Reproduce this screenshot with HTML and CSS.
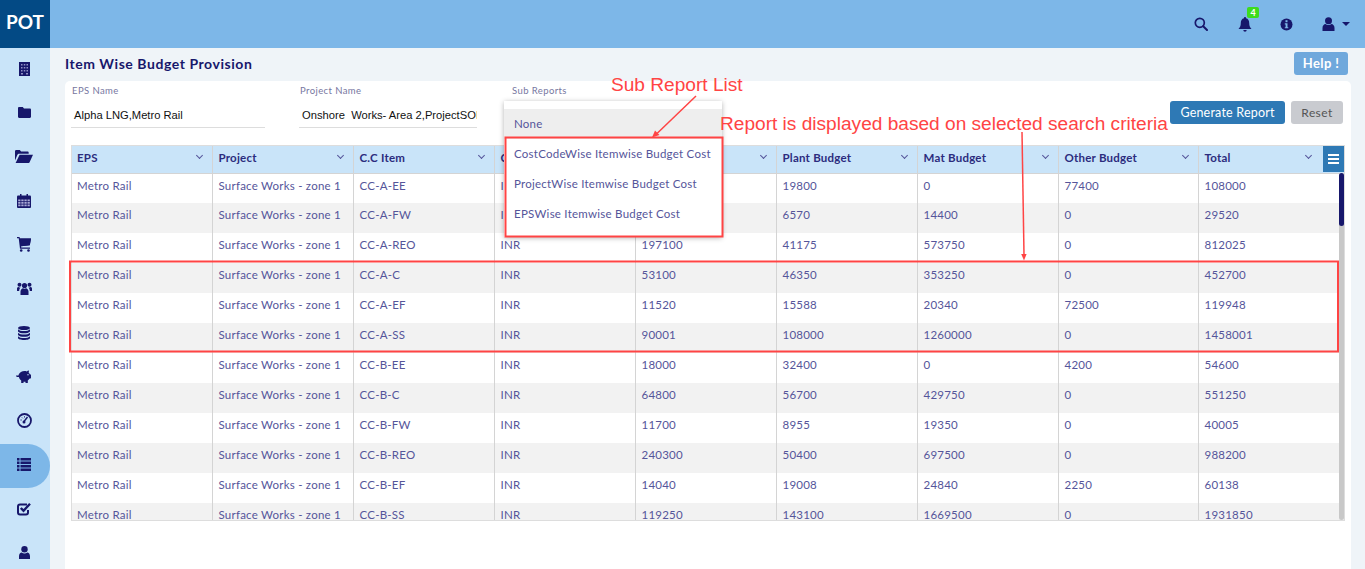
FILE: index.html
```html
<!DOCTYPE html>
<html lang="en">
<head>
  <meta charset="UTF-8">
  <title>Item Wise Budget Provision</title>
  <link rel="stylesheet" href="styles.css">
</head>
<body>

<header class="topbar">
  <div class="logo">POT</div>
  <div class="top-icons">
    <span class="top-icon">
      <svg width="14" height="14" viewBox="0 0 14 14"><circle cx="5.800" cy="5.800" r="4.500" fill="none" stroke="#17176b" stroke-width="1.700"/><path d="M9.200 9.200L13 13" stroke="#17176b" stroke-width="2" stroke-linecap="round"/></svg>
    </span>
    <span class="top-icon bell">
      <svg width="14" height="15" viewBox="0 0 14 15"><path d="M7 0a1 1 0 0 1 1 1.200C10.200 1.700 11.200 3.500 11.200 6c0 3 .8 4.500 2.300 6H.5C2 10.500 2.800 9 2.800 6c0-2.500 1-4.300 3.200-4.800A1 1 0 0 1 7 0zM5.300 13h3.400a1.700 1.700 0 0 1-3.400 0z" fill="#17176b"/></svg>
      <span class="badge">4</span>
    </span>
    <span class="top-icon">
      <svg width="13" height="13" viewBox="0 0 13 13"><circle cx="6.500" cy="6.500" r="6" fill="#17176b"/><rect x="5.500" y="2.200" width="2" height="2" fill="#7db7e8"/><path d="M4.800 5.300h2.700v3.900h.8v1.100H4.800V9.200h.8V6.400h-.8z" fill="#7db7e8"/></svg>
    </span>
    <span class="top-icon user-menu">
      <svg width="13" height="14" viewBox="0 0 13 14"><circle cx="6.500" cy="3.700" r="3.500" fill="#17176b"/><path d="M.5 14v-3C.5 8.500 2 7.200 3.500 7c.8.700 1.800 1 3 1s2.200-.3 3-1c1.500.2 3 1.500 3 4v3z" fill="#17176b"/></svg>
      <i class="caret"></i>
    </span>
  </div>
</header>

<div class="layout">
  <nav class="sidebar">
    <a class="side-item">
      <svg width="11" height="14" viewBox="0 0 11 14"><rect width="11" height="14" fill="#17176b"/><path d="M2 2h1.500v1.500H2zM4.800 2h1.500v1.500H4.800zM7.500 2H9v1.500H7.500zM2 5h1.500v1.500H2zM4.800 5h1.500v1.500H4.800zM7.500 5H9v1.500H7.500zM2 8h1.500v1.500H2zM4.800 8h1.500v1.500H4.800zM7.500 8H9v1.500H7.500zM2 11h2v1.500H2zM7 11h2v1.500H7z" fill="#8f8fc4"/></svg>
    </a>
    <a class="side-item">
      <svg width="13" height="11" viewBox="0 0 13 11"><path d="M1.200 0h3.600l1.200 1.500h5.800c.7 0 1.200.5 1.200 1.200v7.100c0 .7-.5 1.200-1.200 1.200H1.200C.5 11 0 10.500 0 9.800V1.200C0 .5.500 0 1.200 0z" fill="#17176b"/></svg>
    </a>
    <a class="side-item">
      <svg width="18" height="13" viewBox="0 0 18 13"><path d="M0 10.500V1.300C0 .6.500 0 1.200 0h3.600l1.300 1.500h6.400c.7 0 1.200.5 1.200 1.200v1H4.300C3.400 3.700 2.700 4.200 2.300 5z" fill="#17176b"/><path d="M4.600 4.800H18l-3.300 7.200c-.2.600-.8 1-1.400 1H.6z" fill="#17176b"/></svg>
    </a>
    <a class="side-item">
      <svg width="14" height="14" viewBox="0 0 14 14"><rect y="1.500" width="14" height="12.500" rx="1" fill="#17176b"/><path d="M3 0h1.500v3H3zM9.500 0H11v3H9.500z" fill="#17176b"/><path d="M1.200 5.500h2.300v1.700H1.200zM4.300 5.500h2.300v1.700H4.300zM7.400 5.500h2.300v1.700H7.400zM10.500 5.500h2.300v1.700h-2.300zM1.200 8h2.300v1.700H1.200zM4.300 8h2.300v1.700H4.300zM7.400 8h2.300v1.700H7.400zM10.500 8h2.300v1.700h-2.300zM1.200 10.500h2.300v1.700H1.200zM4.300 10.500h2.300v1.700H4.300zM7.400 10.500h2.300v1.700H7.400zM10.500 10.500h2.300v1.700h-2.300z" fill="#a9a9d6"/></svg>
    </a>
    <a class="side-item">
      <svg width="14" height="15" viewBox="0 0 14 15"><path d="M0 0h2.500l.5 1.500H14l-1.200 6.700-8.800 1 .3 1.300h8.700v1.300H3L1.700 1.300H0z" fill="#17176b"/><path d="M3 1.500h11l-1.200 6.700L4 9.200z" fill="#17176b"/><circle cx="4.200" cy="13.500" r="1.300" fill="#17176b"/><circle cx="11.500" cy="13.500" r="1.300" fill="#17176b"/></svg>
    </a>
    <a class="side-item">
      <svg width="15" height="13" viewBox="0 0 15 13"><circle cx="7.500" cy="3.500" r="2.600" fill="#17176b"/><circle cx="2.500" cy="2.800" r="2" fill="#17176b"/><circle cx="12.500" cy="2.800" r="2" fill="#17176b"/><path d="M3.500 13V9.500C3.500 7.500 5 6.500 6 6.300c.9.500 2.100.5 3 0 1 .2 2.500 1.200 2.500 3.200V13zM0 9V6.500C0 5.500.8 5 1.500 5c.7.500 1.300.600 2 .5-.8.800-1.300 2-1.300 3.500zM15 9V6.500C15 5.500 14.200 5 13.500 5c-.7.500-1.300.600-2 .5.800.800 1.300 2 1.300 3.500z" fill="#17176b"/></svg>
    </a>
    <a class="side-item">
      <svg width="12" height="14" viewBox="0 0 12 14"><ellipse cx="6" cy="2" rx="6" ry="2" fill="#17176b"/><path d="M0 3.200C1 4.500 3.500 5 6 5s5-.5 6-1.800v2.300C11 6.800 8.500 7.300 6 7.300S1 6.800 0 5.500zM0 6.700C1 8 3.500 8.500 6 8.500S11 8 12 6.700V9c-1 1.300-3.500 1.800-6 1.800S1 10.300 0 9zM0 10.200c1 1.300 3.500 1.800 6 1.800s5-.5 6-1.800V12c0 1.100-2.700 2-6 2s-6-.9-6-2z" fill="#17176b"/></svg>
    </a>
    <a class="side-item">
      <svg width="17" height="13" viewBox="0 0 17 13"><path d="M2.500 5C3.500 2.500 6 1 8.500 1c.8 0 1.600.1 2.300.4.500-.6 1.300-1 2.200-1l-.3 2.300c.6.500 1 1.100 1.300 1.800H15v3.700l-1.700.5c-.4.700-.9 1.200-1.500 1.700V13H9.500v-1.300h-2V13H5.200v-2.500C4 9.600 3.200 8.400 2.900 7H1.500C.6 7 0 6.400 0 5.500h2.500z" fill="#17176b"/><circle cx="12" cy="4.800" r=".7" fill="#c9e4f9"/></svg>
    </a>
    <a class="side-item">
      <svg width="15" height="15" viewBox="0 0 15 15"><circle cx="7.500" cy="7.500" r="6.500" fill="none" stroke="#17176b" stroke-width="1.800"/><path d="M7 8.500L10.500 4" stroke="#17176b" stroke-width="1.400"/><circle cx="7" cy="9" r="1.500" fill="#17176b"/><path d="M3.500 7h1.200M5 4.500l.8.800M7.500 3.300v1.200" stroke="#17176b"/></svg>
    </a>
    <a class="side-item active">
      <svg width="14" height="13" viewBox="0 0 14 13"><path d="M0 0h2.500v2.500H0zM3.500 0H14v2.500H3.500zM0 3.500h2.500V6H0zM3.500 3.500H14V6H3.500zM0 7h2.500v2.500H0zM3.500 7H14v2.500H3.500zM0 10.500h2.500V13H0zM3.500 10.500H14V13H3.500z" fill="#17176b"/></svg>
    </a>
    <a class="side-item">
      <svg width="14" height="14" viewBox="0 0 14 14"><path d="M11 8v2.500c0 1.200-.8 2-2 2H3c-1.200 0-2-.8-2-2v-6c0-1.200.8-2 2-2h7" fill="none" stroke="#17176b" stroke-width="2"/><path d="M3.800 6L6.500 8.700 13 1.800" fill="none" stroke="#17176b" stroke-width="2.400"/></svg>
    </a>
    <a class="side-item">
      <svg width="11" height="13" viewBox="0 0 11 13"><circle cx="5.500" cy="3.300" r="3.200" fill="#17176b"/><path d="M0 13v-2.800C0 8 1.300 6.800 2.800 6.600c.7.600 1.600 1 2.700 1s2-.4 2.700-1C9.700 6.800 11 8 11 10.200V13z" fill="#17176b"/></svg>
    </a>
  </nav>

  <main class="content">
    <div class="title-row">
      <h1 class="page-title">Item Wise Budget Provision</h1>
      <button class="btn btn-help">Help !</button>
    </div>

    <section class="card">
      <div class="filters">
        <div class="field field-eps">
          <label>EPS Name</label>
          <div class="field-value">Alpha LNG,Metro Rail</div>
        </div>
        <div class="field field-project">
          <label>Project Name</label>
          <div class="field-value">Onshore &nbsp;Works- Area 2,ProjectSOE</div>
        </div>
        <div class="field field-sub">
          <label>Sub Reports</label>
          <ul class="sub-menu">
            <li class="selected">None</li>
            <li>CostCodeWise Itemwise Budget Cost</li>
            <li>ProjectWise Itemwise Budget Cost</li>
            <li>EPSWise Itemwise Budget Cost</li>
          </ul>
        </div>
        <div class="filter-actions">
          <button class="btn btn-generate">Generate Report</button>
          <button class="btn btn-reset">Reset</button>
        </div>
      </div>

      <div class="grid-wrap">
        <table class="grid">
          <thead>
            <tr>
              <th class="th-narrow"><div class="th-in">EPS<i class="chev"></i></div></th>
              <th><div class="th-in">Project<i class="chev"></i></div></th>
              <th><div class="th-in">C.C Item<i class="chev"></i></div></th>
              <th><div class="th-in">Currency<i class="chev"></i></div></th>
              <th><div class="th-in">Labour Budget<i class="chev"></i></div></th>
              <th><div class="th-in">Plant Budget<i class="chev"></i></div></th>
              <th><div class="th-in">Mat Budget<i class="chev"></i></div></th>
              <th class="th-narrow"><div class="th-in">Other Budget<i class="chev"></i></div></th>
              <th class="th-total"><div class="th-in">Total<i class="chev"></i></div></th>
            </tr>
          </thead>
          <tbody>
            <tr><td>Metro Rail</td><td>Surface Works - zone 1</td><td>CC-A-EE</td><td>INR</td><td>10800</td><td>19800</td><td>0</td><td>77400</td><td>108000</td></tr>
            <tr><td>Metro Rail</td><td>Surface Works - zone 1</td><td>CC-A-FW</td><td>INR</td><td>8550</td><td>6570</td><td>14400</td><td>0</td><td>29520</td></tr>
            <tr><td>Metro Rail</td><td>Surface Works - zone 1</td><td>CC-A-REO</td><td>INR</td><td>197100</td><td>41175</td><td>573750</td><td>0</td><td>812025</td></tr>
            <tr><td>Metro Rail</td><td>Surface Works - zone 1</td><td>CC-A-C</td><td>INR</td><td>53100</td><td>46350</td><td>353250</td><td>0</td><td>452700</td></tr>
            <tr><td>Metro Rail</td><td>Surface Works - zone 1</td><td>CC-A-EF</td><td>INR</td><td>11520</td><td>15588</td><td>20340</td><td>72500</td><td>119948</td></tr>
            <tr><td>Metro Rail</td><td>Surface Works - zone 1</td><td>CC-A-SS</td><td>INR</td><td>90001</td><td>108000</td><td>1260000</td><td>0</td><td>1458001</td></tr>
            <tr><td>Metro Rail</td><td>Surface Works - zone 1</td><td>CC-B-EE</td><td>INR</td><td>18000</td><td>32400</td><td>0</td><td>4200</td><td>54600</td></tr>
            <tr><td>Metro Rail</td><td>Surface Works - zone 1</td><td>CC-B-C</td><td>INR</td><td>64800</td><td>56700</td><td>429750</td><td>0</td><td>551250</td></tr>
            <tr><td>Metro Rail</td><td>Surface Works - zone 1</td><td>CC-B-FW</td><td>INR</td><td>11700</td><td>8955</td><td>19350</td><td>0</td><td>40005</td></tr>
            <tr><td>Metro Rail</td><td>Surface Works - zone 1</td><td>CC-B-REO</td><td>INR</td><td>240300</td><td>50400</td><td>697500</td><td>0</td><td>988200</td></tr>
            <tr><td>Metro Rail</td><td>Surface Works - zone 1</td><td>CC-B-EF</td><td>INR</td><td>14040</td><td>19008</td><td>24840</td><td>2250</td><td>60138</td></tr>
            <tr><td>Metro Rail</td><td>Surface Works - zone 1</td><td>CC-B-SS</td><td>INR</td><td>119250</td><td>143100</td><td>1669500</td><td>0</td><td>1931850</td></tr>
          </tbody>
        </table>
        <button class="grid-menu"><i></i><i></i><i></i></button>
        <div class="scroll-track"><div class="scroll-thumb"></div></div>
      </div>
    </section>
  </main>
</div>

<!-- red notes drawn on top of the screenshot -->
<div class="note note-list">Sub Report List</div>
<div class="note note-report">Report is displayed based on selected search criteria</div>
<svg class="note-lines" width="1365" height="569" viewBox="0 0 1365 569">
  <rect x="505.500" y="137.500" width="217" height="99" fill="none" stroke="#f44" stroke-width="2"/>
  <rect x="70" y="261.500" width="1268" height="90" fill="none" stroke="#f44" stroke-width="2"/>
  <path d="M696 96L657 133.500" stroke="#f44" stroke-width="1.500"/>
  <path d="M652 137.500l3-7 4.500 4.500z" fill="#f44"/>
  <path d="M1022 132L1024 255" stroke="#f44" stroke-width="1.500"/>
  <path d="M1024 260.500l-2.800-6.500h5.400z" fill="#f44"/>
</svg>

</body>
</html>
```

FILE: styles.css
```css
* {
  box-sizing: border-box;
}
html, body {
  height: 100%;
}
body {
  margin: 0;
  font-family: "Lato", sans-serif;
  background: #eff4f8;
  color: #55559a;
  overflow: hidden;
}

/* top bar */
.topbar {
  display: flex;
  justify-content: space-between;
  height: 48px;
  background: #7db7e8;
}
.logo {
  width: 50px;
  background: #034a85;
  color: #fff;
  font-weight: bold;
  font-size: 19px;
  line-height: 44px;
  text-align: center;
}
.top-icons {
  display: flex;
  align-items: center;
  padding-right: 11px;
}
.top-icon {
  position: relative;
  display: flex;
  align-items: center;
  justify-content: center;
  width: 43px;
  height: 48px;
}
.bell {
  left: 1px;
}
.user-menu {
  justify-content: flex-start;
  padding-left: 14px;
  gap: 7px;
  width: 46px;
}
.caret {
  border-left: 4px solid transparent;
  border-right: 4px solid transparent;
  border-top: 4px solid #17176b;
}
.badge {
  position: absolute;
  top: 7px;
  left: 24px;
  width: 12px;
  height: 11px;
  background: #3ddc1c;
  border-radius: 2px;
  color: #fff;
  font-size: 9px;
  font-weight: bold;
  line-height: 11px;
  text-align: center;
}

/* sidebar */
.layout {
  display: flex;
  height: calc(100% - 48px);
}
.sidebar {
  width: 50px;
  flex: none;
  background: #c9e4f9;
  overflow: hidden;
}
.side-item {
  display: flex;
  align-items: center;
  justify-content: center;
  height: 44px;
  padding: 0 2px 3px 0;
}
.side-item.active {
  background: #7db7e8;
  border-radius: 0 22px 22px 0;
}

/* main */
.content {
  flex: 1;
  padding: 0 14px 0 15px;
  min-width: 0;
}
.title-row {
  display: flex;
  justify-content: space-between;
  align-items: center;
  height: 33px;
  margin-right: -11px;
  padding-right: 14px;
}
.page-title {
  margin: 0;
  padding-bottom: 2px;
  font-size: 14px;
  font-weight: bold;
  letter-spacing: 0.55px;
  color: #17176b;
}
.btn {
  border: none;
  border-radius: 3px;
  font-family: "Lato", sans-serif;
  font-size: 13px;
  height: 23px;
  padding: 0;
}
.btn-help {
  width: 54px;
  margin-top: -3px;
  background: #6fa8dc;
  color: #fff;
  font-weight: bold;
  letter-spacing: 0.4px;
}
.btn-generate {
  width: 115px;
  background: #2e79b5;
  color: #fff;
  font-size: 12.500px;
  letter-spacing: 0.2px;
}
.btn-reset {
  width: 52px;
  background: #c9cbd0;
  color: #555;
  font-size: 12px;
  letter-spacing: 0.4px;
}
.card {
  background: #fff;
  border-radius: 5px 5px 0 0;
  padding: 0 6px;
  height: 500px;
}

/* filter row */
.filters {
  display: flex;
  height: 64px;
}
.field {
  padding-top: 4px;
}
.field label {
  display: block;
  font-size: 9.500px;
  letter-spacing: 0.4px;
  line-height: 11px;
  color: #77779f;
  padding-left: 1px;
}
.field-value {
  margin-top: 7px;
  height: 25px;
  padding: 5px 0 0 3px;
  border-bottom: 1px solid #ddd;
  font-family: "Liberation Sans", sans-serif;
  font-size: 11.200px;
  line-height: 15px;
  color: #111;
  white-space: nowrap;
  overflow: hidden;
}
.field-eps {
  width: 194px;
}
.field-project {
  width: 178px;
  margin-left: 34px;
}
.field-sub {
  position: relative;
  margin-left: 34px;
  width: 100px;
}
.sub-menu {
  position: absolute;
  top: 20px;
  left: -7px;
  z-index: 5;
  width: 218px;
  margin: 0;
  padding: 8px 0;
  list-style: none;
  background: #fff;
  box-shadow: 0 1px 5px rgba(0, 0, 0, 0.3);
}
.sub-menu li {
  height: 30px;
  padding: 0 10px;
  font-size: 11.500px;
  letter-spacing: 0.25px;
  line-height: 30px;
  white-space: nowrap;
}
.sub-menu .selected {
  background: #eee;
}
.filter-actions {
  display: flex;
  gap: 6px;
  margin-left: auto;
  padding: 20px 2px 0 0;
}

/* grid */
.grid-wrap {
  position: relative;
  height: 376px;
  border: 1px solid #ddd;
  overflow: hidden;
}
.grid {
  width: 100%;
  table-layout: fixed;
  border-collapse: collapse;
  font-size: 11.500px;
  letter-spacing: 0.23px;
}
.grid th {
  width: 141px;
  height: 27px;
  background: #c9e4f9;
  border-right: 1px solid #d4d4d4;
  border-bottom: 1px solid #d4d4d4;
  padding: 0 5px 3px 6px;
  color: #2c2c7e;
  font-weight: bold;
  text-align: left;
}
.grid .th-narrow {
  width: 140px;
}
.grid .th-total {
  width: auto;
  border-right: none;
  padding-right: 28px;
}
.th-in {
  display: flex;
  justify-content: space-between;
  align-items: center;
}
.chev {
  width: 5px;
  height: 5px;
  margin: 0 5px 4px 0;
  border-right: 1px solid #55559a;
  border-bottom: 1px solid #55559a;
  transform: rotate(45deg);
}
.grid td {
  height: 30px;
  padding: 5px 5px 0 6px;
  line-height: 14px;
  vertical-align: top;
  border-right: 1px solid #d4d4d4;
  white-space: nowrap;
  overflow: hidden;
}
.grid th:first-child,
.grid td:first-child {
  padding-left: 5px;
}
.grid td:last-child {
  border-right: none;
}
.grid tbody tr:nth-child(even) {
  background: #f2f2f2;
}
.grid-menu {
  position: absolute;
  top: 0;
  right: 0;
  display: flex;
  flex-direction: column;
  justify-content: center;
  gap: 2px;
  width: 21px;
  height: 26px;
  padding: 0 5px;
  border: none;
  background: #2e79b5;
}
.grid-menu i {
  height: 2px;
  background: #fff;
}
.scroll-track {
  position: absolute;
  top: 27px;
  right: 0;
  bottom: 0;
  width: 5px;
  background: #c8c8c8;
  border-radius: 3px;
}
.scroll-thumb {
  height: 53px;
  background: #17176b;
  border-radius: 3px;
}

/* annotations */
.note {
  position: absolute;
  z-index: 10;
  font-family: "Liberation Sans", sans-serif;
  font-size: 19.100px;
  line-height: 22px;
  color: #f44;
  white-space: nowrap;
}
.note-list {
  top: 74px;
  left: 611px;
}
.note-report {
  top: 113px;
  left: 720px;
}
.note-lines {
  position: absolute;
  top: 0;
  left: 0;
  z-index: 9;
  pointer-events: none;
}
```
